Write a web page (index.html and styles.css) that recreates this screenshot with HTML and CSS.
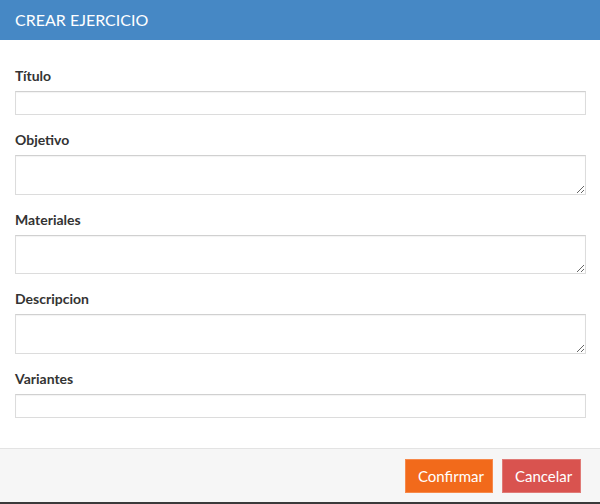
FILE: index.html
```html
<!DOCTYPE html>
<html lang="es">
<head>
<meta charset="utf-8">
<title>Crear ejercicio</title>
<link rel="stylesheet" href="styles.css">
</head>
<body>
<div class="modal">
  <div class="modal-header">CREAR EJERCICIO</div>
  <form class="modal-body">
    <div class="form-group">
      <label class="label" for="titulo">Título</label>
      <input class="field" id="titulo" type="text">
    </div>
    <div class="form-group">
      <label class="label" for="objetivo">Objetivo</label>
      <textarea class="field area" id="objetivo"></textarea>
    </div>
    <div class="form-group">
      <label class="label" for="materiales">Materiales</label>
      <textarea class="field area" id="materiales"></textarea>
    </div>
    <div class="form-group">
      <label class="label" for="descripcion">Descripcion</label>
      <textarea class="field area" id="descripcion"></textarea>
    </div>
    <div class="form-group">
      <label class="label" for="variantes">Variantes</label>
      <input class="field" id="variantes" type="text">
    </div>
  </form>
  <div class="modal-footer">
    <button class="btn btn-confirm" type="button">Confirmar</button>
    <button class="btn btn-cancel" type="button">Cancelar</button>
  </div>
</div>
</body>
</html>
```
FILE: styles.css
```css
* { box-sizing: border-box; }
html, body { margin: 0; padding: 0; }
body {
  font-family: Lato, "Open Sans", "Liberation Sans", sans-serif;
  color: #333;
  background: #fff;
  width: 600px;
  height: 504px;
  overflow: hidden;
}
.modal {
  display: flex;
  flex-direction: column;
  height: 504px;
  border-bottom: 2px solid #3a3a3a;
}
.modal-header {
  height: 40px;
  background: #4688c5;
  color: #fff;
  font-size: 16px;
  line-height: 40px;
  padding: 0 15px;
}
.modal-body {
  flex: 1;
  padding: 26px 14px 0 15px;
  display: flex;
  flex-direction: column;
  gap: 15px;
}
.form-group {
  display: flex;
  flex-direction: column;
  gap: 5px;
}
.label {
  font-size: 14px;
  font-weight: 700;
  line-height: 20px;
  color: #333;
}
.field {
  display: block;
  width: 100%;
  height: 24px;
  margin: 0;
  border: 1px solid #dcdcdc;
  border-top-color: #d0d0d0;
  box-shadow: inset 0 1px 1px rgba(0,0,0,0.05);
  background: #fff;
  font: inherit;
  font-size: 14px;
  padding: 2px 6px;
}
.area {
  height: 39.5px;
  resize: vertical;
}
.modal-footer {
  height: 54px;
  flex: none;
  background: #f6f6f6;
  border-top: 1px solid #e3e3e3;
  display: flex;
  justify-content: flex-end;
  align-items: center;
  gap: 9px;
  padding: 1px 19px 0 0;
}
.btn {
  height: 34px;
  font-family: inherit;
  font-size: 15px;
  color: #fff;
  padding: 0 12px;
  border: 1px solid;
  border-radius: 0;
  cursor: pointer;
}
.btn-confirm {
  width: 88px;
  background: #f26a1b;
  border-color: #f7894a;
}
.btn-cancel {
  width: 79px;
  background: #d9534f;
  border-color: #e07a76;
}
```
